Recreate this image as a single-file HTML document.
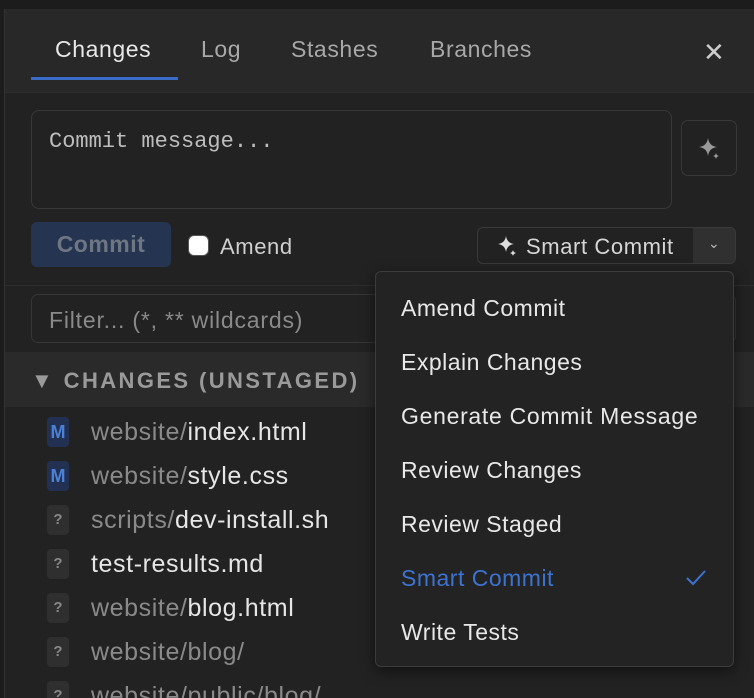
<!DOCTYPE html>
<html><head><meta charset="utf-8"><style>
*{box-sizing:border-box;margin:0;padding:0}
html,body{width:754px;height:698px;overflow:hidden}
body{background:#1c1c1c;font-family:"Liberation Sans",sans-serif;position:relative;color:#e6e6e6}
.panel{position:absolute;left:4px;top:9px;right:0;bottom:0;background:#222;border-left:1px solid #333;overflow:hidden}
.hdr{position:absolute;left:0;top:0;right:0;height:84px;background:#282828;border-bottom:1px solid #2e2e2e}
.tab{position:absolute;top:27px;font-size:23px;color:#a8a8a8;letter-spacing:0.6px}
.abs{position:absolute}
.row{position:absolute;left:42px;font-size:25px;height:30px;line-height:30px;letter-spacing:0.6px;white-space:nowrap}
.badge{display:inline-block;width:22px;height:30px;border-radius:4px;background:#2f2f2f;color:#888;font-size:15px;font-weight:bold;text-align:center;vertical-align:top;margin-right:22px;letter-spacing:0}
.bm{background:#223152;color:#4b82d8;font-size:18px}
.dim{color:#8a8a8a}
.mi{position:absolute;left:25px;font-size:23px;color:#e8e8e8;letter-spacing:0.5px;white-space:nowrap}
</style></head><body>
<div class="panel">
 <div class="hdr">
  <div class="tab" style="left:50px;color:#e8e8e8">Changes</div>
  <div class="tab" style="left:196px">Log</div>
  <div class="tab" style="left:286px">Stashes</div>
  <div class="tab" style="left:425px">Branches</div>
  <div class="abs" style="left:26px;top:68px;width:147px;height:3px;background:#3a6bc6"></div>
  <div class="abs" style="left:698px;top:28px;font-size:26px;color:#ccc">✕</div>
 </div>
 <div class="abs" style="left:26px;top:101px;width:641px;height:99px;border:1px solid #383838;border-radius:8px;background:#222"></div>
 <div class="abs" style="left:44px;top:120px;font-family:'Liberation Mono',monospace;font-size:22px;color:#bdbdbd">Commit message...</div>
 <div class="abs" style="left:676px;top:111px;width:56px;height:56px;border:1px solid #383838;border-radius:7px"></div>
 <svg class="abs" style="left:692px;top:127px" width="26" height="26" viewBox="0 0 26 26"><path d="M11 2 Q12 10 20 11 Q12 12 11 20 Q10 12 2 11 Q10 10 11 2Z" fill="#9a9a9a"/><path d="M19 17 Q19.5 19.5 22 20 Q19.5 20.5 19 23 Q18.5 20.5 16 20 Q18.5 19.5 19 17Z" fill="#9a9a9a"/></svg>
 <div class="abs" style="left:26px;top:213px;width:140px;height:45px;background:#253450;border-radius:6px;color:#6f7683;font-size:23px;font-weight:bold;text-align:center;line-height:45px;letter-spacing:0.5px">Commit</div>
 <div class="abs" style="left:183px;top:226px;width:21px;height:21px;background:#fff;border-radius:6px;border:1px solid #555"></div>
 <div class="abs" style="left:215px;top:225px;font-size:22px;color:#cfcfcf;letter-spacing:0.6px">Amend</div>
 <div class="abs" style="left:472px;top:218px;width:259px;height:37px;border:1px solid #3a3a3a;border-radius:6px"></div>
 <div class="abs" style="left:688px;top:219px;width:42px;height:35px;background:#303030;border-radius:0 5px 5px 0"></div>
 <div class="abs" style="left:703px;top:226px;font-size:14px;color:#bbb">⌄</div>
 <svg class="abs" style="left:490px;top:224px" width="26" height="26" viewBox="0 0 26 26"><path d="M11 3 Q12 10 19 11 Q12 12 11 19 Q10 12 3 11 Q10 10 11 3Z" fill="#ddd"/><path d="M18 17 Q18.5 19.5 21 20 Q18.5 20.5 18 23 Q17.5 20.5 15 20 Q17.5 19.5 18 17Z" fill="#ddd"/></svg>
 <div class="abs" style="left:521px;top:225px;font-size:22px;color:#d6d6d6;letter-spacing:0.6px">Smart Commit</div>
 <div class="abs" style="left:0;top:276px;right:0;height:1px;background:#2e2e2e"></div>
 <div class="abs" style="left:26px;top:285px;width:705px;height:49px;border:1px solid #363636;border-radius:7px"></div>
 <div class="abs" style="left:44px;top:298px;font-size:23px;color:#8a8a8a;letter-spacing:0.8px">Filter... (*, ** wildcards)</div>
 <div class="abs" style="left:0;top:343px;right:0;height:55px;background:#2a2a2a"></div>
 <div class="abs" style="left:26px;top:359px;font-size:22px;font-weight:bold;color:#9a9a9a;letter-spacing:2.4px">▼ CHANGES (UNSTAGED)</div>
 <div class="row" style="top:408px"><span class="badge bm">M</span><span class="dim">website/</span>index.html</div>
 <div class="row" style="top:452px"><span class="badge bm">M</span><span class="dim">website/</span>style.css</div>
 <div class="row" style="top:496px"><span class="badge">?</span><span class="dim">scripts/</span>dev-install.sh</div>
 <div class="row" style="top:540px"><span class="badge">?</span>test-results.md</div>
 <div class="row" style="top:584px"><span class="badge">?</span><span class="dim">website/</span>blog.html</div>
 <div class="row" style="top:628px"><span class="badge">?</span><span class="dim">website/blog/</span></div>
 <div class="row" style="top:672px"><span class="badge">?</span><span class="dim">website/public/blog/</span></div>
</div>
<div class="abs" style="left:375px;top:271px;width:359px;height:396px;background:#232323;border:1px solid #3c3c3c;border-radius:6px;box-shadow:0 4px 14px rgba(0,0,0,.5)">
 <div class="mi" style="top:23px">Amend Commit</div>
 <div class="mi" style="top:77px">Explain Changes</div>
 <div class="mi" style="top:131px;letter-spacing:0.7px">Generate Commit Message</div>
 <div class="mi" style="top:185px">Review Changes</div>
 <div class="mi" style="top:239px">Review Staged</div>
 <div class="mi" style="top:293px;color:#3d73d0">Smart Commit</div>
 <svg class="abs" style="left:309px;top:297px" width="22" height="18" viewBox="0 0 22 18"><path d="M2 9 L8 15 L20 2" stroke="#3d73d0" stroke-width="2" fill="none"/></svg>
 <div class="mi" style="top:347px">Write Tests</div>
</div>
</body></html>
